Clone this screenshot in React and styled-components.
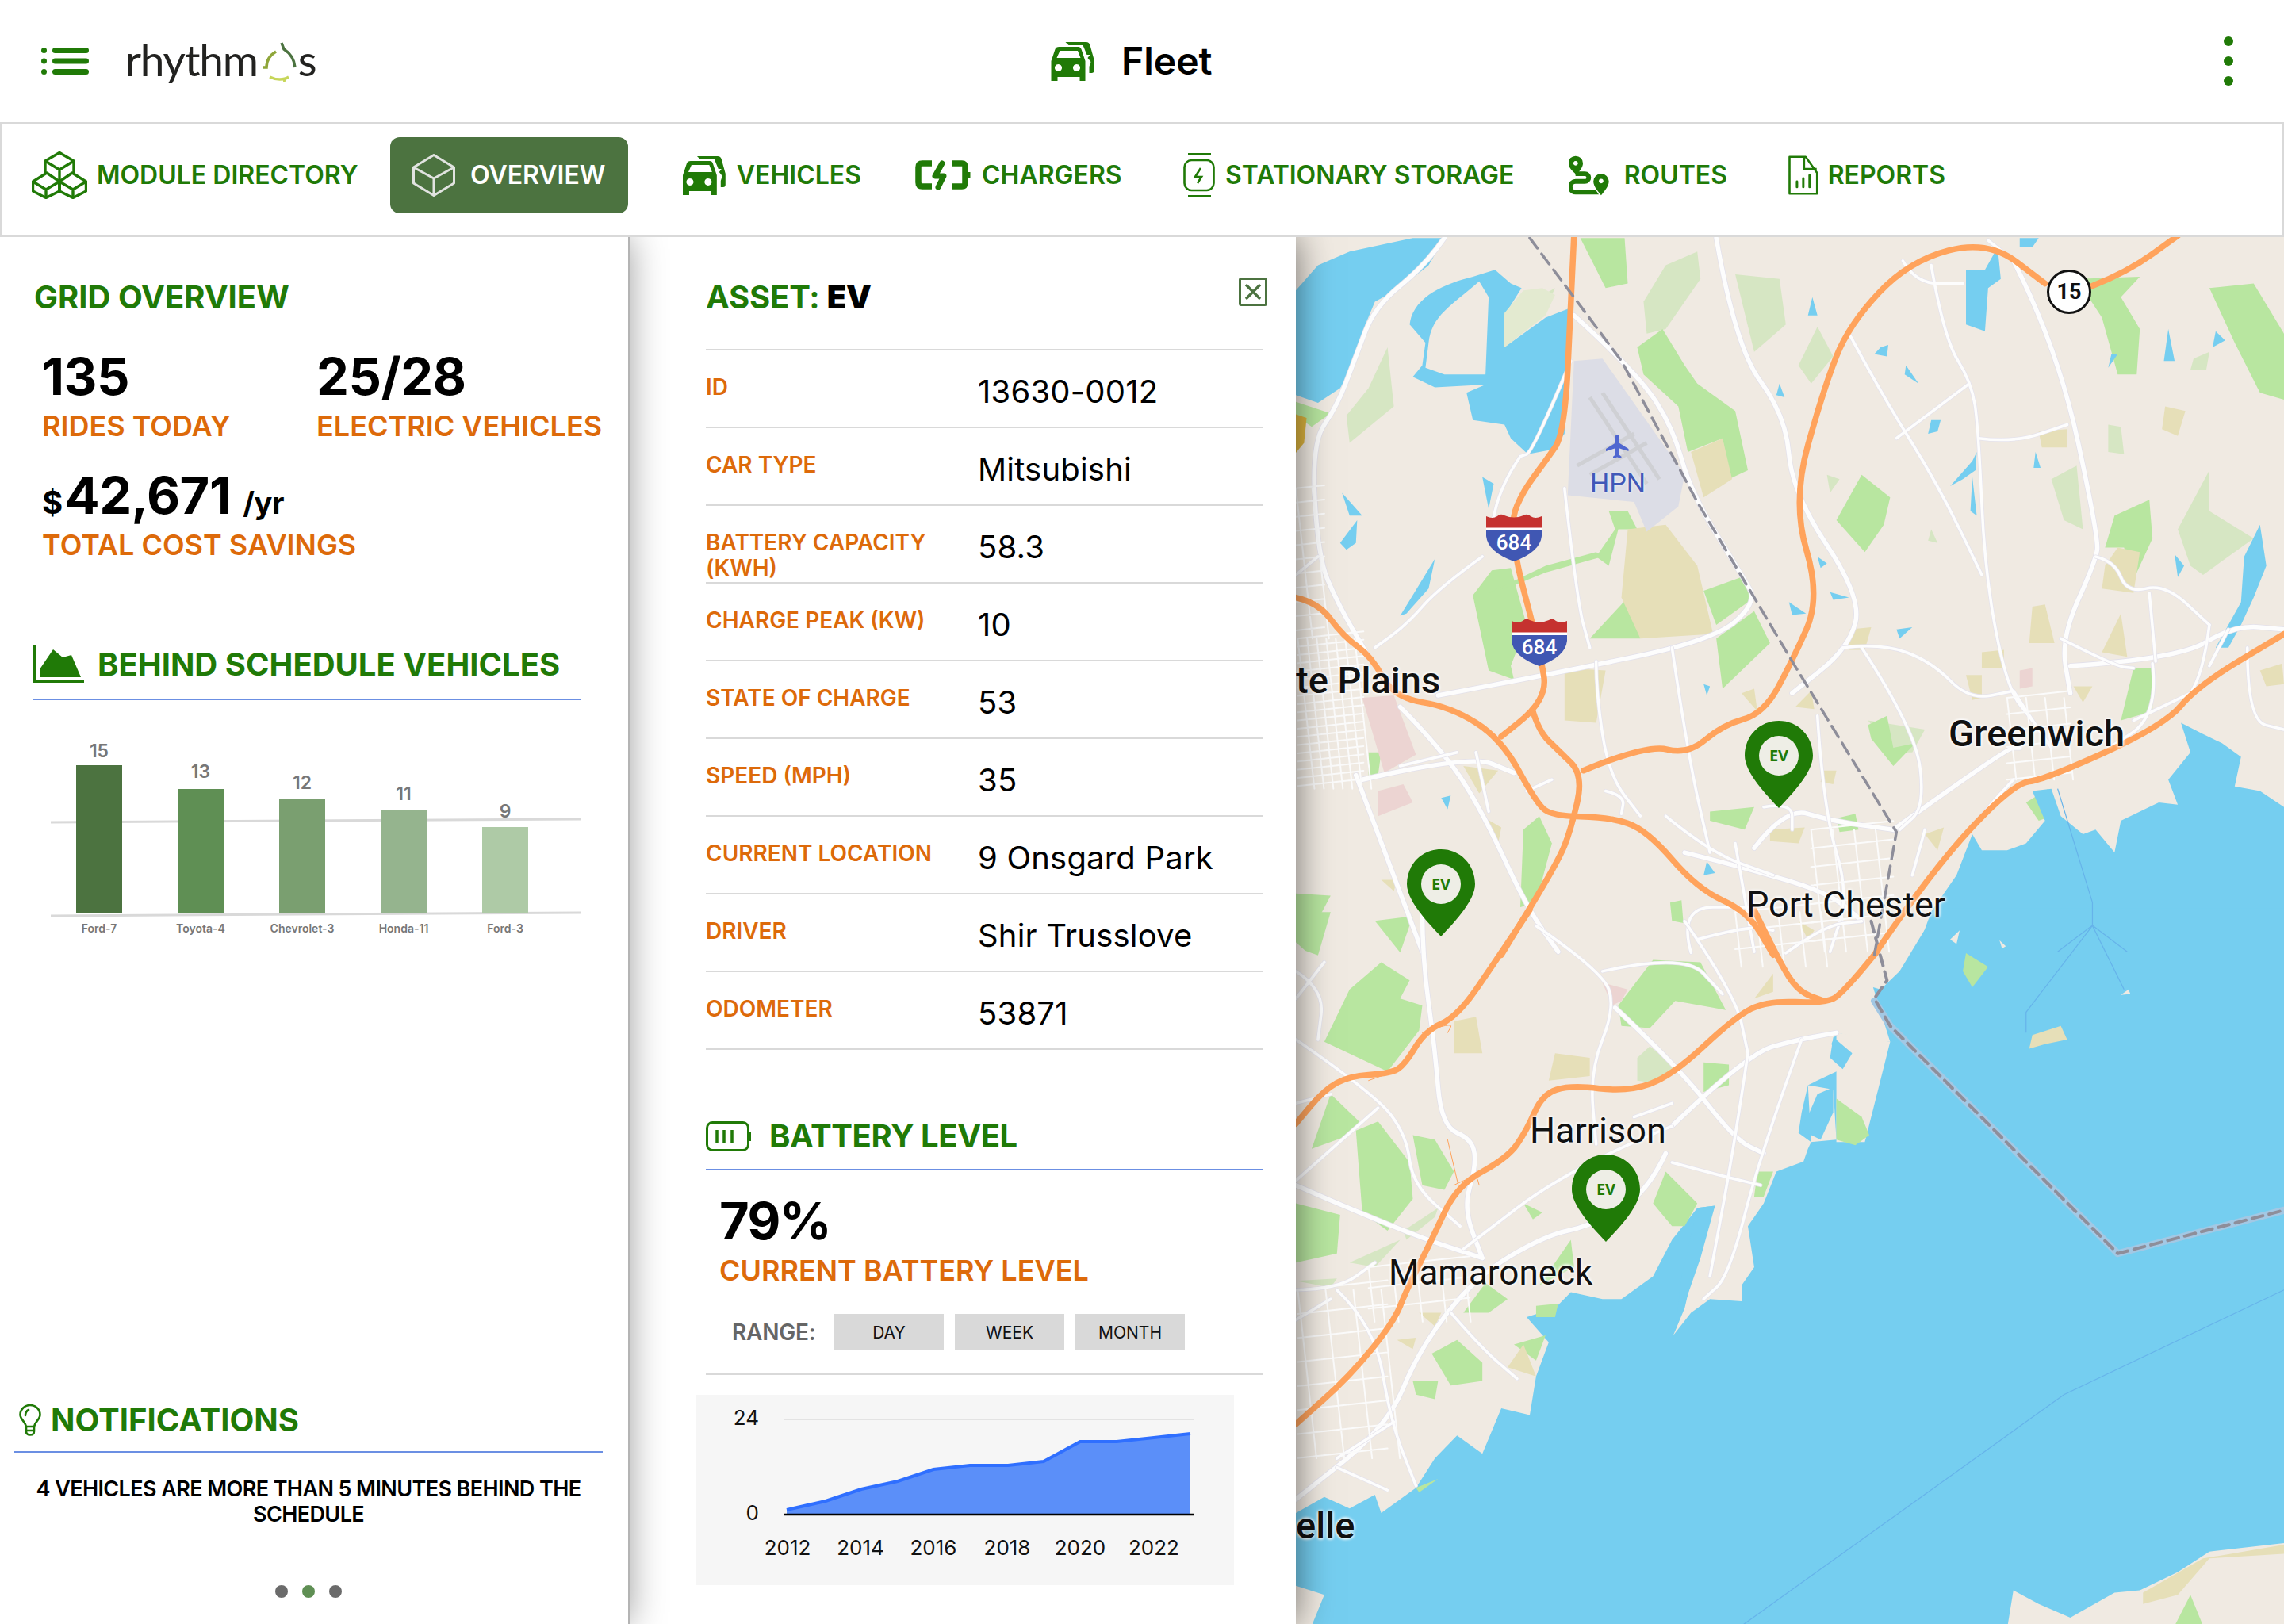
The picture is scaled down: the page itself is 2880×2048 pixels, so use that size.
import React from 'react'
import styled, { createGlobalStyle } from 'styled-components'

const GREEN = '#207a07'
const ORANGE = '#dd6a0a'
const DARK_GREEN = '#4c7340'
const BLUE_LINE = '#6b8fe3'
const GREY_LINE = '#d9d9d9'

const GlobalStyle = createGlobalStyle`
    html, body {
        margin: 0;
        padding: 0;
        background: #fff;
    }
    * {
        box-sizing: border-box;
    }
    body {
        font-family: Inter, "Liberation Sans", sans-serif;
    }
`

// turn "x,y x,y" into a smoothed path
const smooth = (s) => {
    const p = s.trim().split(/\s+/).map((q) => q.split(',').map(Number))
    let d = `M${p[0][0]} ${p[0][1]}`
    for (let i = 1; i < p.length - 1; i++) {
        const mx = (p[i][0] + p[i + 1][0]) / 2
        const my = (p[i][1] + p[i + 1][1]) / 2
        d += ` Q${p[i][0]} ${p[i][1]} ${mx} ${my}`
    }
    const last = p[p.length - 1]
    return d + ` L${last[0]} ${last[1]}`
}

// small street grid for the town centres
const streets = (x0, y0, x1, y1, step) => {
    let d = ''
    for (let x = x0; x <= x1; x += step) d += `M${x} ${y0} L${x + (y1 - y0) * 0.08} ${y1} `
    for (let y = y0; y <= y1; y += step * 1.2) d += `M${x0} ${y} L${x1} ${y - (x1 - x0) * 0.15} `
    return d
}

const NAV = [
    { label: 'MODULE DIRECTORY', icon: 'cubes', left: 0, w: 413, gap: 12 },
    { label: 'OVERVIEW', icon: 'cube', left: 39, w: 300, gap: 19, active: true },
    { label: 'VEHICLES', icon: 'car', left: 69, w: 225, gap: 13 },
    { label: 'CHARGERS', icon: 'charger', left: 68, w: 261, gap: 14 },
    { label: 'STATIONARY STORAGE', icon: 'storage', left: 77, w: 419, gap: 13 },
    { label: 'ROUTES', icon: 'routes', left: 67, w: 200, gap: 19 },
    { label: 'REPORTS', icon: 'reports', left: 77, w: 198, gap: 12 },
]

const ROWS = [
    ['ID', '13630-0012'],
    ['CAR TYPE', 'Mitsubishi'],
    ['BATTERY CAPACITY (KWH)', '58.3'],
    ['CHARGE PEAK (KW)', '10'],
    ['STATE OF CHARGE', '53'],
    ['SPEED (MPH)', '35'],
    ['CURRENT LOCATION', '9 Onsgard Park'],
    ['DRIVER', 'Shir Trusslove'],
    ['ODOMETER', '53871'],
]

const BARS = [
    { name: 'Ford-7', value: 15, x: 54, top: 64, labelY: 46, fill: '#4c7340' },
    { name: 'Toyota-4', value: 13, x: 182, top: 94, labelY: 72, fill: '#5f8f54' },
    { name: 'Chevrolet-3', value: 12, x: 310, top: 106, labelY: 86, fill: '#7a9f70' },
    { name: 'Honda-11', value: 11, x: 438, top: 120, labelY: 100, fill: '#95b48e' },
    { name: 'Ford-3', value: 9, x: 566, top: 142, labelY: 122, fill: '#aecaa6' },
]

const AREA = '114,145 163,134 208,119 254,109 299,94 345,89 393,89 438,84 484,59 530,59 577,54 623,49'
const YEARS = [[115, 2012], [207, 2014], [299, 2016], [392, 2018], [484, 2020], [577, 2022]]

/* map data: coordinates are in one stretched space, the second half sits in a group shifted by 1481 */
const TOP_WATER = [
    'M5,115 L40,60 90,30 190,0 240,0 215,60 170,110 130,140 115,190 105,260 75,330 40,362 5,345 Z',
    'M185,190 C190,130 240,100 285,85 L320,70 345,100 362,110 335,170 335,240 400,175 437,155 L430,430 410,465 372,475 345,440 335,410 285,400 275,340 305,322 225,328 190,305 205,280 210,230 Z',
    'M1065,70 L1095,70 1115,20 1120,90 1100,110 1095,205 1065,190 Z',
    'M1150,0 L1180,0 1170,20 1150,20 Z',
    'M1040,545 L1075,490 1082,470 1080,510 1060,530 Z M1075,525 L1082,610 1072,600 Z',
    'M170,830 L225,705 215,770 180,825 Z M78,560 L110,610 90,610 Z M75,670 L102,620 100,670 85,685 Z M300,525 L318,540 310,595 Z',
    'M822,130 L830,170 815,170 Z M770,320 L778,350 765,345 Z M1010,400 L1025,400 1020,425 1005,430 Z M1175,470 L1183,505 1172,505 Z M970,280 L990,320 968,300 Z M930,240 L942,235 940,260 920,255 Z',
    'M785,800 L812,825 790,828 Z M850,778 L880,790 855,795 Z M955,860 L980,855 960,880 Z M830,700 L845,715 835,725 Z M1295,255 L1305,255 1290,285 Z M1385,200 L1395,270 1378,270 Z M1460,205 L1475,225 1455,240 Z',
    'M1395,695 L1410,720 1400,745 Z M1505,700 L1530,630 1540,720 1520,790 1500,850 1480,900 1460,900 1500,800 Z M235,1230 L250,1225 245,1255 Z M650,980 L660,985 655,1005 Z M655,1370 L668,1395 650,1400 Z',
]
const SEA_TOP = 'M985,1575 L1010,1480 1050,1400 1075,1310 1090,1345 1130,1345 1160,1330 1190,1280 1170,1215 1200,1210 1215,1270 1250,1310 1270,1300 1300,1350 1310,1280 1340,1260 1370,1240 1400,1245 1385,1190 1420,1130 1405,1065 1440,1090 1470,1110 1500,1140 1490,1205 1530,1215 1568,1250 L1575,1580 Z'
const SEA_BOTTOM = 'M1020,-8 L960,130 930,170 918,165 945,285 915,282 860,265 852,290 880,340 860,350 815,380 805,440 800,485 820,505 815,520 808,548 765,570 745,640 720,690 730,780 710,820 710,855 660,850 630,880 602,930 620,870 640,750 668,645 640,650 600,720 570,800 520,850 490,850 440,835 415,870 370,890 405,945 385,1020 375,1105 330,1090 300,1190 260,1150 225,1200 195,1265 140,1320 130,1280 90,1310 50,1285 5,1320 L0,1575 L1130,1575 L1140,1490 1180,1520 1230,1550 1300,1495 1340,1490 1400,1450 1450,1405 1575,1385 L1575,-8 Z'

const GREENS = [
    'M455,0 L525,0 530,100 495,110 Z',
    'M545,240 L585,200 620,280 640,320 700,380 720,510 690,530 680,440 625,470 610,370 555,300 Z',
    'M860,620 L900,520 945,570 935,630 905,690 Z',
    'M285,785 L315,730 345,725 370,850 345,940 350,970 310,950 Z',
    'M670,880 L730,820 755,890 680,990 Z',
    'M1285,680 L1300,610 1355,575 1360,660 1330,750 1315,680 Z',
    'M1240,90 L1340,85 1310,130 1340,200 1335,300 1305,300 1280,175 Z',
    'M1450,110 L1520,100 1568,210 1568,355 1530,340 1490,230 Z',
    'M470,880 L530,790 550,880 Z',
    'M650,775 L710,745 730,790 670,850 Z',
    'M5,360 L60,385 30,415 5,390 Z',
    'M500,600 L530,600 545,640 515,640 500,720 480,700 510,640 Z',
    'M120,1130 L140,1130 135,1180 120,1180 Z',
    'M660,1260 L730,1250 715,1300 660,1280 Z',
    'M910,1070 L940,1050 950,1120 985,1110 950,1160 915,1100 Z',
    'M1330,945 L1360,945 1360,1040 1310,1060 Z',
    'M1160,1240 L1195,1210 1200,1270 1180,1280 Z',
    'M1360,1300 L1400,1260 1440,1270 1400,1300 Z',
    'M1535,1420 L1568,1375 1568,1470 1545,1470 Z',
    'M310,780 L400,720 480,690 490,700 400,735 355,760 Z',
    'M860,1275 L890,1265 895,1300 865,1305 Z',
    'M5,1440 L60,1445 35,1510 5,1540 Z',
    'M597,1460 L615,1455 618,1505 600,1500 Z',
    'M365,1300 L390,1270 410,1330 385,1460 360,1470 Z',
    'M170,1570 L130,1500 190,1490 Z',
]
const PALE_GREENS = [
    'M700,80 L770,90 780,190 730,250 Z',
    'M555,140 L590,60 640,30 645,90 590,200 560,210 Z',
    'M340,170 L415,110 395,170 335,240 Z',
    'M85,390 L120,330 150,240 160,370 90,450 Z',
    'M800,280 L830,195 855,260 820,320 Z',
    'M1010,640 L1020,670 1005,665 Z',
    'M1200,530 L1240,500 1250,640 1220,620 Z',
    'M1400,640 L1450,510 1450,600 1520,660 1440,740 1420,720 Z',
    'M1290,410 L1310,415 1315,475 1290,470 Z',
    'M1425,265 L1450,250 1445,290 1420,290 Z',
    'M845,520 L865,530 850,560 Z',
    'M910,1060 L1000,1080 980,1130 950,1130 Z',
]
const TANS = [
    'M520,790 L530,640 590,630 640,720 665,870 550,880 Z',
    'M630,470 L680,440 695,530 650,570 Z',
    'M1380,370 L1412,380 1400,435 1375,420 Z',
    'M1180,425 L1225,420 1225,460 1185,460 Z',
    'M1285,720 L1305,680 1340,690 1330,780 1280,770 Z',
    'M1170,810 L1190,805 1205,890 1165,890 Z',
    'M1280,910 L1310,825 1320,920 Z',
    'M430,945 L495,950 480,1065 430,1060 Z',
    'M1090,910 L1125,905 1125,945 1090,945 Z',
    'M1065,960 L1090,960 1090,1010 1075,1015 Z',
    'M880,860 L915,855 905,905 880,905 Z',
    'M710,1000 L730,990 735,1040 Z',
    'M795,1030 L820,995 825,1035 Z',
    'M840,1170 L860,1170 855,1200 835,1195 Z',
    'M1235,985 L1265,985 1250,1020 Z',
    'M1530,950 L1565,935 1568,980 1540,985 Z',
    'M1000,1310 L1030,1295 1020,1345 Z',
    'M755,1300 L810,1295 800,1330 755,1325 Z',
    'M305,1275 L330,1295 325,1330 Z',
    'M270,1160 L325,1170 295,1220 Z',
    'M140,1410 L165,1410 160,1435 Z',
]
const BOTTOM_GREENS = [
    'M90,170 L140,110 185,150 170,190 205,205 200,260 150,350 50,285 Z',
    'M100,480 L135,460 185,550 190,630 150,700 110,660 Z',
    'M5,640 L75,665 70,750 5,770 Z',
    'M190,490 L225,500 255,570 240,610 205,600 Z',
    'M30,520 L60,400 105,460 90,490 Z',
    'M570,640 L590,570 640,640 620,690 600,690 Z',
    'M570,105 L645,110 685,215 605,195 565,255 520,250 515,205 Z',
    'M650,330 L690,335 690,380 650,395 Z',
    'M860,410 L900,450 912,490 890,512 860,500 Z',
    'M220,970 L260,940 300,990 300,1030 250,1040 Z',
    'M190,1030 L230,1030 225,1070 195,1060 Z',
    'M270,880 L305,815 340,850 310,880 Z',
    'M350,950 L400,930 385,985 Z',
    'M385,865 L420,860 415,890 385,890 Z',
    'M390,820 L440,720 445,780 Z',
    'M365,640 L395,660 380,675 Z',
    'M735,570 L760,570 745,625 730,625 Z',
    'M1065,90 L1100,120 1075,165 1060,130 Z',
    'M195,1265 L230,1245 200,1275 Z',
    'M1395,1568 L1420,1500 1440,1568 Z',
    'M0,60 L30,0 60,0 40,95 20,85 Z',
]
const BOTTOM_TANS = [
    'M255,240 L290,230 300,310 255,310 Z',
    'M405,370 L415,310 470,320 470,360 Z',
    'M200,880 L235,880 225,910 Z',
    'M165,940 L195,935 190,960 Z',
    'M340,1000 L365,950 385,1020 Z',
    'M730,190 L760,135 760,175 Z',
    'M800,20 L825,40 815,60 Z',
    'M1165,300 L1170,270 1215,250 1225,280 1190,290 Z',
    'M1345,1495 L1440,1420 1568,1390 1568,1410 1450,1420 1400,1500 1345,1520 Z',
]
const BOTTOM_PALE = [
    'M545,320 L565,295 605,340 570,375 545,370 Z',
    'M175,700 L230,650 225,670 180,720 Z',
    'M5,810 L70,805 60,825 Z',
    'M90,770 L170,720 130,780 Z',
]
const BOTTOM_LAND = [
    'M5,1480 L50,1500 30,1568 5,1568 Z',
    'M1310,182 L1322,170 1325,180 Z',
    'M1040,60 L1055,40 1050,70 Z',
    'M1118,62 L1128,75 1122,80 Z',
]

const MAJOR_ROADS = [
    '240,0 210,60 130,150 100,260 70,370 30,450 40,700 70,800 120,920',
    '445,170 540,290 600,410 630,560 710,740 735,800 665,885 400,960 230,1005',
    '670,0 700,240 780,390 790,560 900,790 880,900 790,1000',
    '1140,50 1210,240 1275,660 1270,710 1215,880 1230,1000',
    '170,1030 240,1130 300,1260 370,1470 420,1568',
    '110,1190 280,1135 350,1175',
    '100,1180 205,1568',
    '950,1300 1130,1120 1150,1120',
    '1230,940 1400,925 1490,850 1568,860',
    '730,1340 780,1250 850,1280 950,1300',
    '620,1350 720,1385 850,1440 900,1500',
]
const MINOR_ROADS = [
    '1010,60 1030,220 1075,320 1085,430 1095,740 1130,990 1170,1060',
    '880,210 930,340 1020,540 1090,740',
    '955,440 1070,320',
    '1085,440 1140,450 1225,410',
    '1270,700 1300,710 1320,780 1380,760 1450,850',
    '870,900 930,890 1010,930 1070,1015 1140,995',
    '480,930 480,1000 500,1180 550,1270',
    '430,550 450,800 470,900',
    '600,900 625,1135 660,1350',
    '830,1050 840,1260 880,1440 850,1568',
    '900,900 985,1080 1000,1250 960,1300',
    '1355,780 1365,930',
    '1450,850 1440,960 1400,1040',
    '300,700 230,770 180,850 130,900',
    '360,480 330,540 310,660',
    '965,50 985,100 1060,100',
    '1100,5 1150,60',
    '410,1190 370,1215',
    '495,1215 525,1225 520,1265',
    '745,1250 790,1240 790,1300',
    '590,1270 660,1350 760,1400',
    '440,270 380,470 360,480',
    '1140,995 1170,1060 1200,1120',
    '1215,880 1300,940 1330,945',
    '1330,1060 1420,1000',
    '1360,935 1370,1050 1280,1130',
    '1510,900 1510,1060 1568,1080',
    '1480,860 1450,940',
    '260,1130 170,1160',
    '310,1260 290,1130',
    '40,700 5,740',
    '1010,1400 1100,1250 1140,1190',
    '980,1400 1000,1300',
    '700,1330 730,1568',
    '630,1570 610,1470 720,1470',
]
const BOTTOM_MAJOR = [
    '205,-5 205,100 225,300 235,470 285,500 290,560 270,650 300,760',
    '590,530 560,620 470,690 400,710 290,800 200,960 150,1130 5,1290',
    '600,470 720,310 800,280 860,265',
    '510,210 610,340 700,500 745,530',
    '5,600 170,700 300,760',
]
const BOTTOM_MINOR = [
    '5,280 130,400 180,490 190,600 265,690',
    '135,430 5,590',
    '385,30 490,130 510,210 470,350 480,510',
    '490,130 620,90 680,180',
    '600,470 440,560 270,740',
    '720,310 700,500 660,800',
    '805,280 740,530 690,800 650,850',
    '250,880 300,960 355,1025',
    '70,830 130,910 155,1120 195,1260',
    '640,60 720,30 760,40',
    '620,20 700,180 720,310',
    '70,1200 160,1120',
    '70,1220 150,1270',
    '0,830 70,830 130,770',
    '0,900 60,850',
    '540,450 600,420',
    '600,550 680,580 740,600',
    '5,130 50,170 40,280',
    '5,190 50,110',
    '5,420 60,400',
    '780,90 840,30 900,20',
]
const RAMPS = ['205,265 255,240 245,265', '120,370 150,355', '255,600 290,575 295,600', '245,500 262,600']

const CAR_BODY = 'M11 62 V37 L16 22 Q17 19 21 19 H45 Q48 19 49 22 L54 37 V62 H47 V57 H19 V62 Z M18 33 H48 L44.500 24 H22 Z M20 41 a4.500 4.500 0 1 0 .01 0 Z M43 41 a4.500 4.500 0 1 0 .01 0 Z'
const CAR_BEHIND = 'M29 13 H55 Q59 13 60 17 L65 35 V49 Q65 52 62 52 H59 V44 L61 38 L57 33 L60 29 H56 L51 17 H33 Z'

// green nav and title icons, drawn to match the reference
const icons = {
    cubes: (
        <svg width="70" height="60" viewBox="0 0 70 60" fill="none" stroke={GREEN} strokeWidth="3.4" strokeLinejoin="round">
            <path d="M35 1.500 L53 12 L35 23 L17 12 Z M17 12 V28 M53 12 V28 M35 23 V48" />
            <path d="M19 27 L1.500 38 V50 L18 58.500 L35 50 V38 Z M1.500 38 L18 48 L35 38 M18 48 V58.500" />
            <path d="M51 27 L35 38 V50 L52 58.500 L68.500 50 V38 Z M35 38 L52 48 L68.500 38 M52 48 V58.500" />
        </svg>
    ),
    cube: (
        <svg width="54" height="54" viewBox="0 0 54 54" fill="none" stroke="#e1e3e0" strokeWidth="3" strokeLinejoin="round">
            <path d="M27 1.500 L52.500 17 V37 L27 52.500 L1.500 37 V17 Z M1.500 17 L27 31 L52.500 17 M27 31 V52.500" />
        </svg>
    ),
    car: (
        <svg width="55" height="50" viewBox="11 12 55 50" fill={GREEN}>
            <path fillRule="evenodd" d={CAR_BODY} />
            <path d={CAR_BEHIND} />
        </svg>
    ),
    charger: (
        <svg width="70" height="40" viewBox="8 14 70 40" fill="none" stroke={GREEN} strokeWidth="7.500" strokeLinejoin="round">
            <path d="M29 19 H17 Q12 19 12 24 V43 Q12 48 17 48 H29" />
            <path d="M54 19 H67 Q71 19 71 24 V43 Q71 48 67 48 H54" />
            <path d="M75 30 V38" strokeWidth="5" />
            <path d="M42 19 L33 35 H44 L37 49" strokeLinecap="round" strokeWidth="7" />
        </svg>
    ),
    storage: (
        <svg width="40" height="56" viewBox="0 0 40 56" fill="none" stroke={GREEN} strokeWidth="2.600">
            <path d="M6 1.500 H35 M6 54.500 H35" strokeWidth="3" />
            <rect x="1.500" y="9" width="37" height="38" rx="9" />
            <path d="M22 19 L15 30 H23 L18 38" strokeWidth="2.600" />
        </svg>
    ),
    routes: (
        <svg width="52" height="52" viewBox="13 8 52 52" fill={GREEN}>
            <path fillRule="evenodd" d="M22 9 a9.500 9.500 0 0 1 9.500 9.500 C31.500 24 26 30 23 33 C19 30 12.500 24 12.500 18.500 A9.500 9.500 0 0 1 22 9 Z M22 15.500 a3 3 0 1 0 .01 0 Z" />
            <path fillRule="evenodd" d="M55 32 a10 10 0 0 1 10 10 C65 49 58 56 55 60 C52 56 45 49 45 42 A10 10 0 0 1 55 32 Z M55 38.500 a3 3 0 1 0 .01 0 Z" />
            <path d="M21 29 H34 a8 8 0 0 1 0 16 H22 a4 4 0 0 0 0 8 H48 L52 59 H22 a10 10 0 0 1 0 -20 H34 a2 2 0 0 0 0 -4 H22 Z" />
        </svg>
    ),
    reports: (
        <svg width="38" height="50" viewBox="0 0 38 50" fill="none" stroke={GREEN} strokeWidth="2.600" strokeLinejoin="round">
            <path d="M1.500 1.500 H22 L36.500 22 V48.500 H1.500 Z M20 1.500 V17 H36" />
            <path d="M11 40 V33 M19 40 V29 M27 40 V25" strokeWidth="3" strokeLinecap="round" />
        </svg>
    ),
}

function App() {
    return (
        <Page>
            <GlobalStyle />
            <Header>
                <Brand>
                    <svg width="60" height="34" viewBox="0 0 60 34" fill={GREEN}>
                        <rect x="0" y="0" width="7" height="7" rx="3.500" />
                        <rect x="0" y="13.500" width="7" height="7" rx="3.500" />
                        <rect x="0" y="27" width="7" height="7" rx="3.500" />
                        <rect x="14" y="0" width="46" height="7" rx="3.500" />
                        <rect x="14" y="13.500" width="46" height="7" rx="3.500" />
                        <rect x="14" y="27" width="46" height="7" rx="3.500" />
                    </svg>
                    <Logo>
                        rhythm
                        <svg width="50" height="50" viewBox="0 0 50 50" fill="none" strokeWidth="3.500">
                            <path d="M4 32 L8 32 C8 22 13 16 20 12" stroke="#8fa63a" />
                            <path d="M27 1 L30 9 C38 14 43 22 44 32" stroke="#4c7340" />
                            <path d="M12 44 C20 48 30 48 36 44 M30 46 L31 50" stroke="#c7d65a" />
                        </svg>
                        s
                    </Logo>
                </Brand>
                <PageTitle>
                    <svg width="56" height="50" viewBox="11 12 55 50" fill={GREEN}>
                        <path fillRule="evenodd" d={CAR_BODY} />
                        <path d={CAR_BEHIND} />
                    </svg>
                    <FleetText>Fleet</FleetText>
                </PageTitle>
                <Kebab>
                    <KebabDot />
                    <KebabDot />
                    <KebabDot />
                </Kebab>
            </Header>

            <Nav>
                {NAV.map((item) => (
                    <NavItem key={item.label} $left={item.left} $w={item.w} $gap={item.gap} $active={item.active}>
                        {icons[item.icon]}
                        <span>{item.label}</span>
                    </NavItem>
                ))}
            </Nav>

            <Body>
                <LeftPanel>
                    <Overview>
                        <GridTitle>GRID OVERVIEW</GridTitle>
                        <StatRow>
                            <Stat>
                                <StatValue>135</StatValue>
                                <StatLabel>RIDES TODAY</StatLabel>
                            </Stat>
                            <Stat>
                                <StatValue>25/28</StatValue>
                                <StatLabel>ELECTRIC VEHICLES</StatLabel>
                            </Stat>
                        </StatRow>
                        <Saving>
                            <StatValue>
                                <Small>$</Small>42,671 <Per>/yr</Per>
                            </StatValue>
                            <StatLabel>TOTAL COST SAVINGS</StatLabel>
                        </Saving>
                    </Overview>

                    <ScheduleHead>
                        <svg width="64" height="48" viewBox="0 0 64 48">
                            <path d="M1.500 0 V46.500 H64" fill="none" stroke={GREEN} strokeWidth="3" />
                            <path d="M8 41 V31 L25 6 L37 16 L48 13 L60 41 Z" fill={GREEN} />
                        </svg>
                        <span>BEHIND SCHEDULE VEHICLES</span>
                    </ScheduleHead>
                    <BarChart width="692" height="285" viewBox="0 0 692 285">
                        <line x1="22" y1="136" x2="690" y2="132" stroke={GREY_LINE} strokeWidth="3" />
                        <line x1="22" y1="254" x2="690" y2="250" stroke={GREY_LINE} strokeWidth="3" />
                        {BARS.map((b) => (
                            <g key={b.name}>
                                <rect x={b.x} y={b.top} width="58" height={251 - b.top} fill={b.fill} />
                                <BarValue x={b.x + 29} y={b.labelY + 8} textAnchor="middle">{b.value}</BarValue>
                                <BarName x={b.x + 29} y="275" textAnchor="middle">{b.name}</BarName>
                            </g>
                        ))}
                    </BarChart>

                    <Notifications>
                        <NotifyHead>
                            <svg width="28" height="40" viewBox="0 0 28 40" fill="none" stroke={GREEN} strokeWidth="2.600" strokeLinecap="round">
                                <path d="M9 28 C8 22 1.500 19 1.500 13 A12.500 12 0 0 1 26.500 13 C26.500 19 20 22 19 28 Z" />
                                <path d="M9 28 V34 Q9 38.500 14 38.500 Q19 38.500 19 34 V28 M9 33 H19" />
                                <path d="M8 14 C8 10 10 8 12 7" />
                            </svg>
                            <span>NOTIFICATIONS</span>
                        </NotifyHead>
                        <NotifyText>4 VEHICLES ARE MORE THAN 5 MINUTES BEHIND THE SCHEDULE</NotifyText>
                        <Pager>
                            <PagerDot />
                            <PagerDot $on />
                            <PagerDot />
                        </Pager>
                    </Notifications>
                </LeftPanel>

                <AssetPanel>
                    <AssetHead>
                        <AssetTitle>
                            ASSET: <b>EV</b>
                        </AssetTitle>
                        <CloseBox>
                            <svg width="22" height="22" viewBox="0 0 22 22" stroke={DARK_GREEN} strokeWidth="3.400">
                                <path d="M2 2 L20 20 M20 2 L2 20" />
                            </svg>
                        </CloseBox>
                    </AssetHead>
                    <AssetTable>
                        {ROWS.map(([label, value]) => (
                            <AssetRow key={label}>
                                <AssetLabel>{label}</AssetLabel>
                                <AssetValue>{value}</AssetValue>
                            </AssetRow>
                        ))}
                    </AssetTable>

                    <BatteryHead>
                        <svg width="58" height="38" viewBox="0 0 58 38" fill="none" stroke={GREEN} strokeWidth="3">
                            <rect x="1.500" y="1.500" width="52" height="35" rx="7" />
                            <path d="M55 13 V25" strokeWidth="4" />
                            <path d="M14 11 V27 M23 11 V27 M33 11 V27" strokeWidth="3.500" />
                        </svg>
                        <span>BATTERY LEVEL</span>
                    </BatteryHead>
                    <BatteryValue>79%</BatteryValue>
                    <BatteryLabel>CURRENT BATTERY LEVEL</BatteryLabel>
                    <RangeRow>
                        <RangeLabel>RANGE:</RangeLabel>
                        <RangeButton>DAY</RangeButton>
                        <RangeButton>WEEK</RangeButton>
                        <RangeButton>MONTH</RangeButton>
                    </RangeRow>
                    <ChartCard>
                        <svg width="678" height="240" viewBox="0 0 678 240">
                            <line x1="110" y1="31" x2="628" y2="31" stroke="#e3e3e3" strokeWidth="2" />
                            <path d={`M114 145 L${AREA.split(' ').slice(1).join(' L')} V151 H114 Z`} fill="#5b8ff9" />
                            <polyline points={AREA} fill="none" stroke="#2f6fff" strokeWidth="4" />
                            <line x1="110" y1="151" x2="628" y2="151" stroke="#000" strokeWidth="2.500" />
                            <AxisText x="79" y="38" textAnchor="end">24</AxisText>
                            <AxisText x="79" y="158" textAnchor="end">0</AxisText>
                            {YEARS.map(([x, y]) => (
                                <AxisText key={y} x={x} y="202" textAnchor="middle">{y}</AxisText>
                            ))}
                        </svg>
                    </ChartCard>
                </AssetPanel>

                <MapPane>
                    <MapSvg viewBox="5 -2 1563 3047" preserveAspectRatio="none">
                        <rect x="0" y="-10" width="1580" height="3070" fill="#f0eae2" />
                        <g fill="#d6e6c3">{PALE_GREENS.map((d) => <path key={d} d={d} />)}</g>
                        <g fill="#b8e6a0">{GREENS.map((d) => <path key={d} d={d} />)}</g>
                        <g fill="#e6dfb8">{TANS.map((d) => <path key={d} d={d} />)}</g>
                        <path d="M445,270 L490,265 620,520 610,590 560,645 540,580 435,565 Z" fill="#dcdde6" />
                        <path d="M470,350 L560,540 M490,340 L580,530 M450,500 L540,430 M470,520 L560,450" stroke="#cfd0d4" strokeWidth="5" fill="none" />
                        <path d="M110,1010 L160,1005 195,1135 145,1175 Z M135,1215 L175,1200 190,1240 135,1270 Z M1150,950 L1170,945 1170,985 1150,990 Z" fill="#ecd4d2" />
                        <path d="M0,385 L22,395 18,450 0,480 Z" fill="#dcb440" />
                        <g fill="#75cef0">
                            {TOP_WATER.map((d) => <path key={d} d={d} />)}
                            <path d={SEA_TOP} />
                        </g>
                        <path d="M215,230 C220,170 250,150 295,95 L310,130 305,300 240,300 210,285 Z" fill="#f0eae2" />
                        <path d="M335,165 L365,115 395,110 415,125 400,170 335,240 Z" fill="#e3ead0" />

                        <g transform="translate(0,1481)">
                            <path d={SEA_BOTTOM} fill="#75cef0" />
                            <path d="M815,380 L855,390 860,500 820,505 Z" fill="#f0eae2" />
                            <path d="M860,265 L945,285 905,505 860,505 Z" fill="#f0eae2" />
                            <path d="M830,400 L855,385 855,440 835,500 805,480 Z" fill="#75cef0" />
                            <path d="M855,275 L885,310 870,345 850,320 Z" fill="#75cef0" />
                            <path d="M640,650 L668,645 645,760 620,860 605,920 615,800 Z" fill="#75cef0" />
                            <g fill="#b8e6a0">{BOTTOM_GREENS.map((d) => <path key={d} d={d} />)}</g>
                            <g fill="#d6e6c3">{BOTTOM_PALE.map((d) => <path key={d} d={d} />)}</g>
                            <g fill="#e6dfb8">{BOTTOM_TANS.map((d) => <path key={d} d={d} />)}</g>
                            <path d="M490,155 L530,170 520,195 505,205 Z" fill="#ecd4d2" />
                            <g fill="#f0eae2">{BOTTOM_LAND.map((d) => <path key={d} d={d} />)}</g>
                            <path d="M710,1568 L1220,1060 1568,830 M1160,265 V220 L1265,30 1315,170" fill="none" stroke="#66b3ea" strokeWidth="1.200" />
                        </g>
                        <path d="M1210,1210 L1265,1460 1265,1510 1210,1568 M1265,1510 L1320,1568" fill="none" stroke="#66b3ea" strokeWidth="1.200" />

                        <Roads $w={7} $c="#e3e1ea">{MAJOR_ROADS.map((r) => <path key={r} d={smooth(r)} />)}</Roads>
                        <Roads $w={5.500} $c="#fdfdfd">{MAJOR_ROADS.map((r) => <path key={r} d={smooth(r)} />)}</Roads>
                        <Roads $w={5} $c="#e5e3ec">{MINOR_ROADS.map((r) => <path key={r} d={smooth(r)} />)}</Roads>
                        <Roads $w={3.500} $c="#fdfdfd">{MINOR_ROADS.map((r) => <path key={r} d={smooth(r)} />)}</Roads>
                        <Roads $w={2} $c="#fbfbfb">
                            <path d={streets(8, 880, 112, 1210, 15)} />
                            <path d={streets(820, 1300, 950, 1568, 34)} />
                            <path d={streets(1130, 1010, 1230, 1190, 30)} />
                            <path d={streets(5, 550, 50, 880, 26)} />
                        </Roads>
                        <g transform="translate(0,1481)">
                            <Roads $w={7} $c="#e3e1ea">{BOTTOM_MAJOR.map((r) => <path key={r} d={smooth(r)} />)}</Roads>
                            <Roads $w={5.500} $c="#fdfdfd">{BOTTOM_MAJOR.map((r) => <path key={r} d={smooth(r)} />)}</Roads>
                            <Roads $w={5} $c="#e5e3ec">{BOTTOM_MINOR.map((r) => <path key={r} d={smooth(r)} />)}</Roads>
                            <Roads $w={3.500} $c="#fdfdfd">{BOTTOM_MINOR.map((r) => <path key={r} d={smooth(r)} />)}</Roads>
                            <Roads $w={2} $c="#fbfbfb">
                                <path d={streets(700, 0, 860, 120, 34)} />
                                <path d={streets(8, 830, 150, 1200, 44)} />
                                <path d={streets(120, 780, 280, 900, 38)} />
                            </Roads>
                            <Roads $w={7.500} $c="#ffa35c">
                                <path d={smooth('375,-5 320,110 260,230 210,260 175,340 150,355 90,360 50,390 5,465')} />
                                <path d={smooth('925,85 870,180 840,200 750,195 700,230 600,360 530,395 440,380 395,400 370,480 340,540 260,600 220,720 180,830 160,900 90,1020 5,1125')} />
                                <path d={smooth('730,-5 770,110 800,175 840,195')} />
                            </Roads>
                            <Roads $w={1} $c="#ffa35c">{RAMPS.map((r) => <path key={r} d={smooth(r)} />)}</Roads>
                            <Roads $w={9} $c="#a3c8e4">
                                <path d="M920,195 L945,250 1305,750 1568,655" />
                            </Roads>
                            <Roads $w={4} $c="#8e8e9a" $dash="14 8">
                                <path d="M915,20 L940,150 920,190 945,250 1305,750 1568,655" />
                            </Roads>
                        </g>
                        <Roads $w={7.500} $c="#ffa35c">
                            <path d={smooth('445,-5 440,150 430,430 400,490 365,555 345,620 355,720 380,850 395,940 400,990 380,1040 330,1095')} />
                            <path d={smooth('5,790 40,800 80,875 125,920 160,1010 250,1030 330,1100 385,1240 410,1270 500,1272 560,1300 640,1430 720,1480 760,1575')} />
                            <path d={smooth('380,1040 390,1085 420,1125 460,1180 440,1300 420,1370 330,1575')} />
                            <path d={smooth('460,1170 560,1112 625,1135 680,1070 745,1045 790,930 835,790 790,580 840,330 880,190 975,50 1100,5 1190,100')} />
                            <path d={smooth('1265,105 1320,75 1400,-5')} />
                            <path d={smooth('920,1575 1010,1390 1140,1198 1190,1190 1380,1070 1430,985 1568,870')} />
                        </Roads>
                        <Roads $w={3.500} $c="#8e8e9a" $dash="16 9">
                            <path d="M375,0 L520,270 640,580 790,930 955,1305 920,1575" />
                        </Roads>
                    </MapSvg>

                    <PlaneMark viewBox="0 0 24 24">
                        <path d="M21 16v-2l-8-5V3.500c0-.83-.67-1.500-1.500-1.500S10 2.670 10 3.500V9l-8 5v2l8-2.500V19l-2 1.500V22l3.500-1 3.500 1v-1.500L13 19v-5.500l8 2.500z" />
                    </PlaneMark>
                    <AirportCode>HPN</AirportCode>

                    <PlaceLabel $x={0} $y={531} $size={47} $weight={500}>te Plains</PlaceLabel>
                    <PlaceLabel $x={823} $y={598} $size={47} $weight={500}>Greenwich</PlaceLabel>
                    <PlaceLabel $x={568} $y={814} $size={45} $weight={400}>Port Chester</PlaceLabel>
                    <PlaceLabel $x={295} $y={1099} $size={45} $weight={400}>Harrison</PlaceLabel>
                    <PlaceLabel $x={117} $y={1278} $size={44} $weight={400}>Mamaroneck</PlaceLabel>
                    <PlaceLabel $x={0} $y={1597} $size={47} $weight={500}>elle</PlaceLabel>

                    <Shield $x={239} $y={347} />
                    <Shield $x={271} $y={479} />
                    <RouteBadge>15</RouteBadge>
                    <Pin $x={566} $y={610} />
                    <Pin $x={140} $y={772} />
                    <Pin $x={348} $y={1157} />
                </MapPane>
            </Body>
        </Page>
    )
}

const ShieldBase = ({ className }) => (
    <svg className={className} width="72" height="62" viewBox="0 0 72 62">
        <path d="M1 22 H71 V30 Q69 50 36 62 Q3 50 1 30 Z" fill="#4057b3" />
        <path d="M1 21 V5 Q9 9 15 5 Q19 1 24 4 Q36 9 48 4 Q53 1 57 5 Q63 9 71 5 V21 Z" fill="#c5322f" />
        <path d="M1 19.500 H71 V23 H1 Z" fill="#fff" />
        <ShieldText x="36" y="47" textAnchor="middle">684</ShieldText>
    </svg>
)

const PinBase = ({ className }) => (
    <svg className={className} width="86" height="110" viewBox="0 0 86 110">
        <path d="M43 0 C19 0 0 19 0 44 C0 66 30 96 43 110 C56 96 86 66 86 44 C86 19 67 0 43 0 Z" fill={GREEN} />
        <circle cx="43" cy="44" r="25" fill="#eeeee6" />
        <PinText x="43" y="51" textAnchor="middle">EV</PinText>
    </svg>
)

export default App

const Page = styled.div`
    width: 2880px;
    height: 2048px;
    display: flex;
    flex-direction: column;
    overflow: hidden;
    background: #fff;
`

const Header = styled.header`
    height: 154px;
    display: grid;
    grid-template-columns: 1273px 1fr auto;
    align-items: center;
    padding: 0 64px 0 52px;
    flex-shrink: 0;
`

const Brand = styled.div`
    display: flex;
    align-items: center;
    gap: 46px;
`

const Logo = styled.div`
    display: flex;
    align-items: center;
    height: 50px;
    margin-top: -4px;
    font-family: Lato, sans-serif;
    font-size: 55px;
    font-weight: 400;
    line-height: 50px;
    color: #222220;
    letter-spacing: -1.2px;

    svg {
        margin: 6px -2px 0 3px;
    }
`

const PageTitle = styled.div`
    display: flex;
    align-items: center;
    gap: 33px;
`

const FleetText = styled.div`
    font-size: 48px;
    line-height: 50px;
    font-weight: 600;
    color: #000;
`

const Kebab = styled.div`
    display: flex;
    flex-direction: column;
    gap: 13px;
`

const KebabDot = styled.span`
    width: 12px;
    height: 12px;
    border-radius: 50%;
    background: ${GREEN};
`

const Nav = styled.nav`
    height: 145px;
    flex-shrink: 0;
    display: flex;
    align-items: center;
    padding: 0 0 12px 38px;
    border: 3px solid ${GREY_LINE};
    border-left-width: 2px;
    background: #fff;
    position: relative;
    z-index: 3;
`

const NavItem = styled.div`
    display: flex;
    align-items: center;
    flex-shrink: 0;
    margin-left: ${(p) => p.$left}px;
    width: ${(p) => p.$w}px;
    gap: ${(p) => p.$gap}px;
    height: ${(p) => (p.$active ? '96px' : 'auto')};
    padding-left: ${(p) => (p.$active ? '28px' : 0)};
    border-radius: 12px;
    background: ${(p) => (p.$active ? DARK_GREEN : 'transparent')};
    color: ${(p) => (p.$active ? '#fff' : GREEN)};
    font-size: 32px;
    font-weight: 600;
    letter-spacing: 0;
    line-height: 40px;
    white-space: nowrap;
`

const Body = styled.div`
    flex: 1;
    display: flex;
    min-height: 0;
`

const LeftPanel = styled.aside`
    width: 792px;
    flex-shrink: 0;
    display: flex;
    flex-direction: column;
    background: #fff;
    position: relative;
    z-index: 2;
    box-shadow: 2px 0 0 #b4b4b4, 0 0 44px rgba(0, 0, 0, 0.42);
`

const Overview = styled.section`
    padding: 56px 0 0 43px;
`

const GridTitle = styled.h2`
    margin: 0;
    font-size: 40px;
    line-height: 40px;
    font-weight: 700;
    letter-spacing: 0;
    color: ${GREEN};
`

const StatRow = styled.div`
    display: grid;
    grid-template-columns: 346px 1fr;
    margin: 45px 0 0 10px;
`

const Stat = styled.div`
    white-space: nowrap;
`

const StatValue = styled.div`
    font-size: 65px;
    line-height: 70px;
    font-weight: 700;
    letter-spacing: -0.5px;
    color: #000;
`

const Small = styled.span`
    font-size: 40px;
    line-height: 1;
    margin-right: 3px;
`

const Per = styled.span`
    font-size: 38px;
    line-height: 1;
    margin-left: 0;
`

const StatLabel = styled.div`
    margin-top: 7px;
    font-size: 36px;
    line-height: 40px;
    font-weight: 600;
    letter-spacing: 0;
    color: ${ORANGE};
`

const Saving = styled.div`
    margin: 33px 0 0 10px;
`

const ScheduleHead = styled.div`
    margin: 105px 60px 0 42px;
    height: 71px;
    padding-bottom: 19px;
    display: flex;
    align-items: center;
    gap: 17px;
    border-bottom: 2px solid ${BLUE_LINE};
    font-size: 40px;
    font-weight: 700;
    letter-spacing: 0;
    color: ${GREEN};
    white-space: nowrap;
`

const BarChart = styled.svg`
    display: block;
    margin: 18px 0 0 42px;
    flex-shrink: 0;
`

const BarValue = styled.text`
    font-family: Inter, sans-serif;
    font-size: 23px;
    font-weight: 600;
    fill: #777;
`

const BarName = styled.text`
    font-family: Inter, sans-serif;
    font-size: 14px;
    font-weight: 600;
    fill: #777;
`

const Notifications = styled.section`
    margin-top: auto;
    padding: 0 32px 33px 18px;
    display: flex;
    flex-direction: column;
`

const NotifyHead = styled.div`
    display: flex;
    align-items: center;
    gap: 12px;
    padding: 0 0 17px 6px;
    border-bottom: 2px solid ${BLUE_LINE};
    font-size: 40px;
    line-height: 44px;
    font-weight: 700;
    letter-spacing: 0;
    color: ${GREEN};
`

const NotifyText = styled.div`
    margin-top: 30px;
    padding: 0 20px;
    text-align: center;
    font-size: 27px;
    line-height: 32px;
    font-weight: 600;
    letter-spacing: -0.6px;
    color: #000;
`

const Pager = styled.div`
    margin: 73px 0 0 0;
    display: flex;
    justify-content: center;
    gap: 18px;
`

const PagerDot = styled.span`
    width: 16px;
    height: 16px;
    border-radius: 50%;
    background: ${(p) => (p.$on ? '#5f8f54' : '#6b6b6b')};
`

const AssetPanel = styled.section`
    width: 842px;
    flex-shrink: 0;
    padding: 54px 42px 0 98px;
    display: flex;
    flex-direction: column;
    background: #fff;
    position: relative;
    z-index: 1;
    box-shadow: 0 0 44px rgba(0, 0, 0, 0.55);
`

const AssetHead = styled.div`
    display: flex;
    justify-content: space-between;
    align-items: flex-start;
    height: 87px;
`

const AssetTitle = styled.h2`
    margin: 0;
    font-size: 40px;
    line-height: 44px;
    font-weight: 700;
    letter-spacing: -0.2px;
    color: ${GREEN};

    b {
        color: #000;
    }
`

const CloseBox = styled.div`
    width: 36px;
    height: 36px;
    margin: -3px -6px 0 0;
    display: flex;
    align-items: center;
    justify-content: center;
    border: 3.5px solid ${DARK_GREEN};
    border-radius: 3px;
`

const AssetTable = styled.div`
    border-bottom: 2px solid ${GREY_LINE};
`

const AssetRow = styled.div`
    height: 98px;
    display: grid;
    grid-template-columns: 343px 1fr;
    border-top: 2px solid ${GREY_LINE};
`

const AssetLabel = styled.div`
    padding-top: 30px;
    font-size: 28px;
    line-height: 32px;
    font-weight: 600;
    letter-spacing: 0;
    color: ${ORANGE};
`

const AssetValue = styled.div`
    padding-top: 27px;
    font-size: 40px;
    line-height: 50px;
    font-weight: 400;
    letter-spacing: 0.2px;
    color: #000;
`

const BatteryHead = styled.div`
    margin-top: 84px;
    height: 68px;
    padding-bottom: 16px;
    display: flex;
    align-items: center;
    gap: 22px;
    border-bottom: 2px solid ${BLUE_LINE};
    font-size: 40px;
    line-height: 50px;
    font-weight: 700;
    letter-spacing: -0.4px;
    color: ${GREEN};
`

const BatteryValue = styled.div`
    margin: 29px 0 0 17px;
    font-size: 65px;
    line-height: 70px;
    font-weight: 700;
    letter-spacing: -1.8px;
    color: #000;
`

const BatteryLabel = styled.div`
    margin: 7px 0 0 17px;
    font-size: 36px;
    line-height: 40px;
    font-weight: 600;
    letter-spacing: 0;
    color: ${ORANGE};
`

const RangeRow = styled.div`
    margin-top: 35px;
    padding: 0 0 29px 33px;
    display: flex;
    align-items: center;
    gap: 14px;
    border-bottom: 2px solid ${GREY_LINE};
`

const RangeLabel = styled.span`
    width: 115px;
    font-size: 28px;
    font-weight: 600;
    letter-spacing: -0.2px;
    color: #666;
`

const RangeButton = styled.div`
    width: 138px;
    height: 46px;
    display: flex;
    align-items: center;
    justify-content: center;
    background: #d9d9d9;
    font-size: 21px;
    color: #111;
`

const ChartCard = styled.div`
    margin: 25px 0 0 -12px;
    width: 678px;
    height: 240px;
    background: #f6f6f6;

    svg {
        display: block;
    }
`

const AxisText = styled.text`
    font-family: Inter, sans-serif;
    font-size: 26px;
    fill: #111;
`

const MapPane = styled.section`
    flex: 1;
    position: relative;
    overflow: hidden;
    background: #f0eae2;
`

const MapSvg = styled.svg`
    display: block;
    width: 100%;
    height: 100%;

    path {
        vector-effect: non-scaling-stroke;
    }
`

const Roads = styled.g`
    fill: none;
    stroke: ${(p) => p.$c};
    stroke-width: ${(p) => p.$w};
    stroke-linejoin: round;
    stroke-linecap: round;
    stroke-dasharray: ${(p) => p.$dash || 'none'};
`

const PlaceLabel = styled.span`
    position: absolute;
    left: ${(p) => p.$x}px;
    top: ${(p) => p.$y}px;
    font-family: Roboto, sans-serif;
    font-size: ${(p) => p.$size}px;
    font-weight: ${(p) => p.$weight};
    line-height: 56px;
    color: #111;
    white-space: nowrap;
    text-shadow: 0 0 4px #fff, 0 0 4px #fff, 0 0 3px #fff;
`

const AirportCode = styled.span`
    position: absolute;
    left: 371px;
    top: 291px;
    font-family: Roboto, sans-serif;
    font-size: 34px;
    line-height: 38px;
    color: #4058b8;
    text-shadow: 0 0 3px #fff;
`

const PlaneMark = styled.svg`
    position: absolute;
    left: 388px;
    top: 246px;
    width: 36px;
    height: 36px;
    fill: #4f66d0;
`

const Shield = styled(ShieldBase)`
    position: absolute;
    left: ${(p) => p.$x}px;
    top: ${(p) => p.$y}px;
`

const ShieldText = styled.text`
    font-family: Roboto, sans-serif;
    font-size: 26px;
    font-weight: 500;
    fill: #fff;
`

const RouteBadge = styled.div`
    position: absolute;
    left: 947px;
    top: 41px;
    width: 56px;
    height: 56px;
    display: flex;
    align-items: center;
    justify-content: center;
    border: 3px solid #111;
    border-radius: 50%;
    background: #fff;
    font-family: Roboto, sans-serif;
    font-size: 27px;
    font-weight: 700;
    color: #111;
`

const Pin = styled(PinBase)`
    position: absolute;
    left: ${(p) => p.$x}px;
    top: ${(p) => p.$y}px;
`

const PinText = styled.text`
    font-family: "Open Sans", sans-serif;
    font-size: 20px;
    font-weight: 700;
    fill: ${GREEN};
`
